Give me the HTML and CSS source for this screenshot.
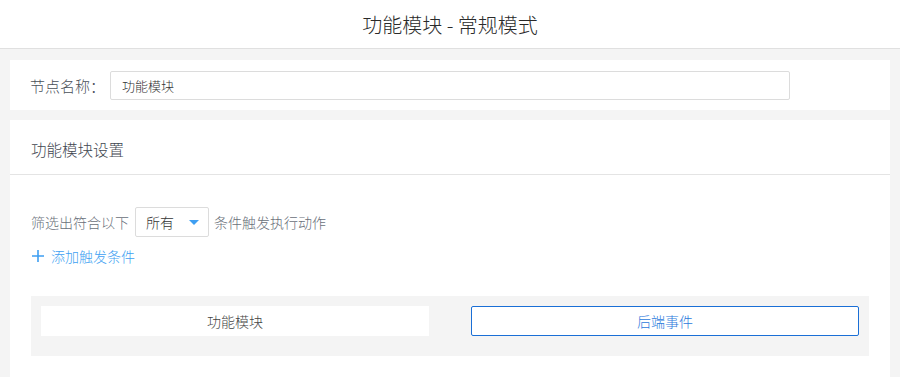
FILE: index.html
```html
<!DOCTYPE html>
<html lang="zh-CN">
<head>
  <meta charset="utf-8" />
  <title>功能模块 - 常规模式</title>
  <link rel="stylesheet" href="styles.css">
</head>
<body>
  <header class="page-header">功能模块 - 常规模式</header>

  <main class="page-body">
    <!-- Node name -->
    <section class="card name-card">
      <label class="name-label" for="nodeName">节点名称：</label>
      <input class="name-input" id="nodeName" type="text" value="功能模块">
    </section>

    <!-- Module settings -->
    <section class="card settings-card">
      <div class="card-title">功能模块设置</div>
      <div class="card-content">
        <div class="filter-row">
          <span>筛选出符合以下</span>
          <div class="select-box">
            <span>所有</span>
            <span class="caret"></span>
          </div>
          <span>条件触发执行动作</span>
        </div>
        <div class="add-link">
          <svg class="plus" width="14" height="14" viewBox="0 0 14 14">
            <path d="M7 1v12M1 7h12" stroke="#3e9ff2" stroke-width="1.6" fill="none"/>
          </svg>
          <span>添加触发条件</span>
        </div>

        <div class="tab-panel">
          <div class="tab-item">功能模块</div>
          <div class="tab-item active">后端事件</div>
        </div>
      </div>
    </section>
  </main>
</body>
</html>
```

FILE: styles.css
```css
body {
  margin: 0;
  background-color: #f4f4f4;
  font-family: "Noto Sans CJK SC", "Noto Sans", sans-serif;
  font-weight: 300;
  color: #333;
}

.page-header {
  height: 48px;
  line-height: 50px;
  background-color: #fff;
  border-bottom: 1px solid #e0e0e0;
  text-align: center;
  font-size: 20px;
  color: #2a2a2a;
}

.page-body {
  padding: 11px 10px 0;
}

.card {
  background-color: #fff;
}

.name-card {
  height: 50px;
  padding: 0 20px;
  display: flex;
  align-items: center;
  margin-bottom: 10px;
}

.name-label {
  width: 80px;
  font-size: 15px;
  color: #4a4f58;
}

.name-input {
  width: 680px;
  height: 29px;
  box-sizing: border-box;
  border: 1px solid #dcdcdc;
  border-radius: 2px;
  padding: 0 11px;
  font-family: inherit;
  font-weight: 300;
  font-size: 13px;
  color: #333;
  outline: none;
}

.card-title {
  padding: 18px 21px 14px;
  line-height: 22px;
  font-size: 15.5px;
  color: #41464f;
  border-bottom: 1px solid #e4e4e4;
}

.card-content {
  padding: 32px 21px 30px;
}

.filter-row {
  display: flex;
  align-items: center;
  font-size: 14px;
  color: #6a707a;
}

.select-box {
  width: 74px;
  height: 30px;
  box-sizing: border-box;
  margin: 0 5px 0 6px;
  padding: 0 9px 0 10px;
  border: 1px solid #dcdcdc;
  border-radius: 2px;
  display: flex;
  align-items: center;
  justify-content: space-between;
  color: #333;
}

.caret {
  width: 0;
  height: 0;
  border-left: 5px solid transparent;
  border-right: 5px solid transparent;
  border-top: 5px solid #3e9ff2;
}

.add-link {
  margin-top: 9px;
  height: 20px;
  display: flex;
  align-items: center;
  gap: 6px;
  font-size: 14px;
  color: #3e9ff2;
}

.tab-panel {
  margin-top: 30px;
  padding: 10px;
  height: 40px;
  background-color: #f4f4f4;
  display: grid;
  grid-template-columns: 1fr 1fr;
  gap: 42px;
  align-items: start;
}

.tab-item {
  height: 30px;
  line-height: 30px;
  box-sizing: border-box;
  background-color: #fff;
  text-align: center;
  font-size: 14px;
  color: #444;
}

.tab-item.active {
  border: 1px solid #1a6fd6;
  border-radius: 2px;
  line-height: 28px;
  color: #2b79dc;
}
```
